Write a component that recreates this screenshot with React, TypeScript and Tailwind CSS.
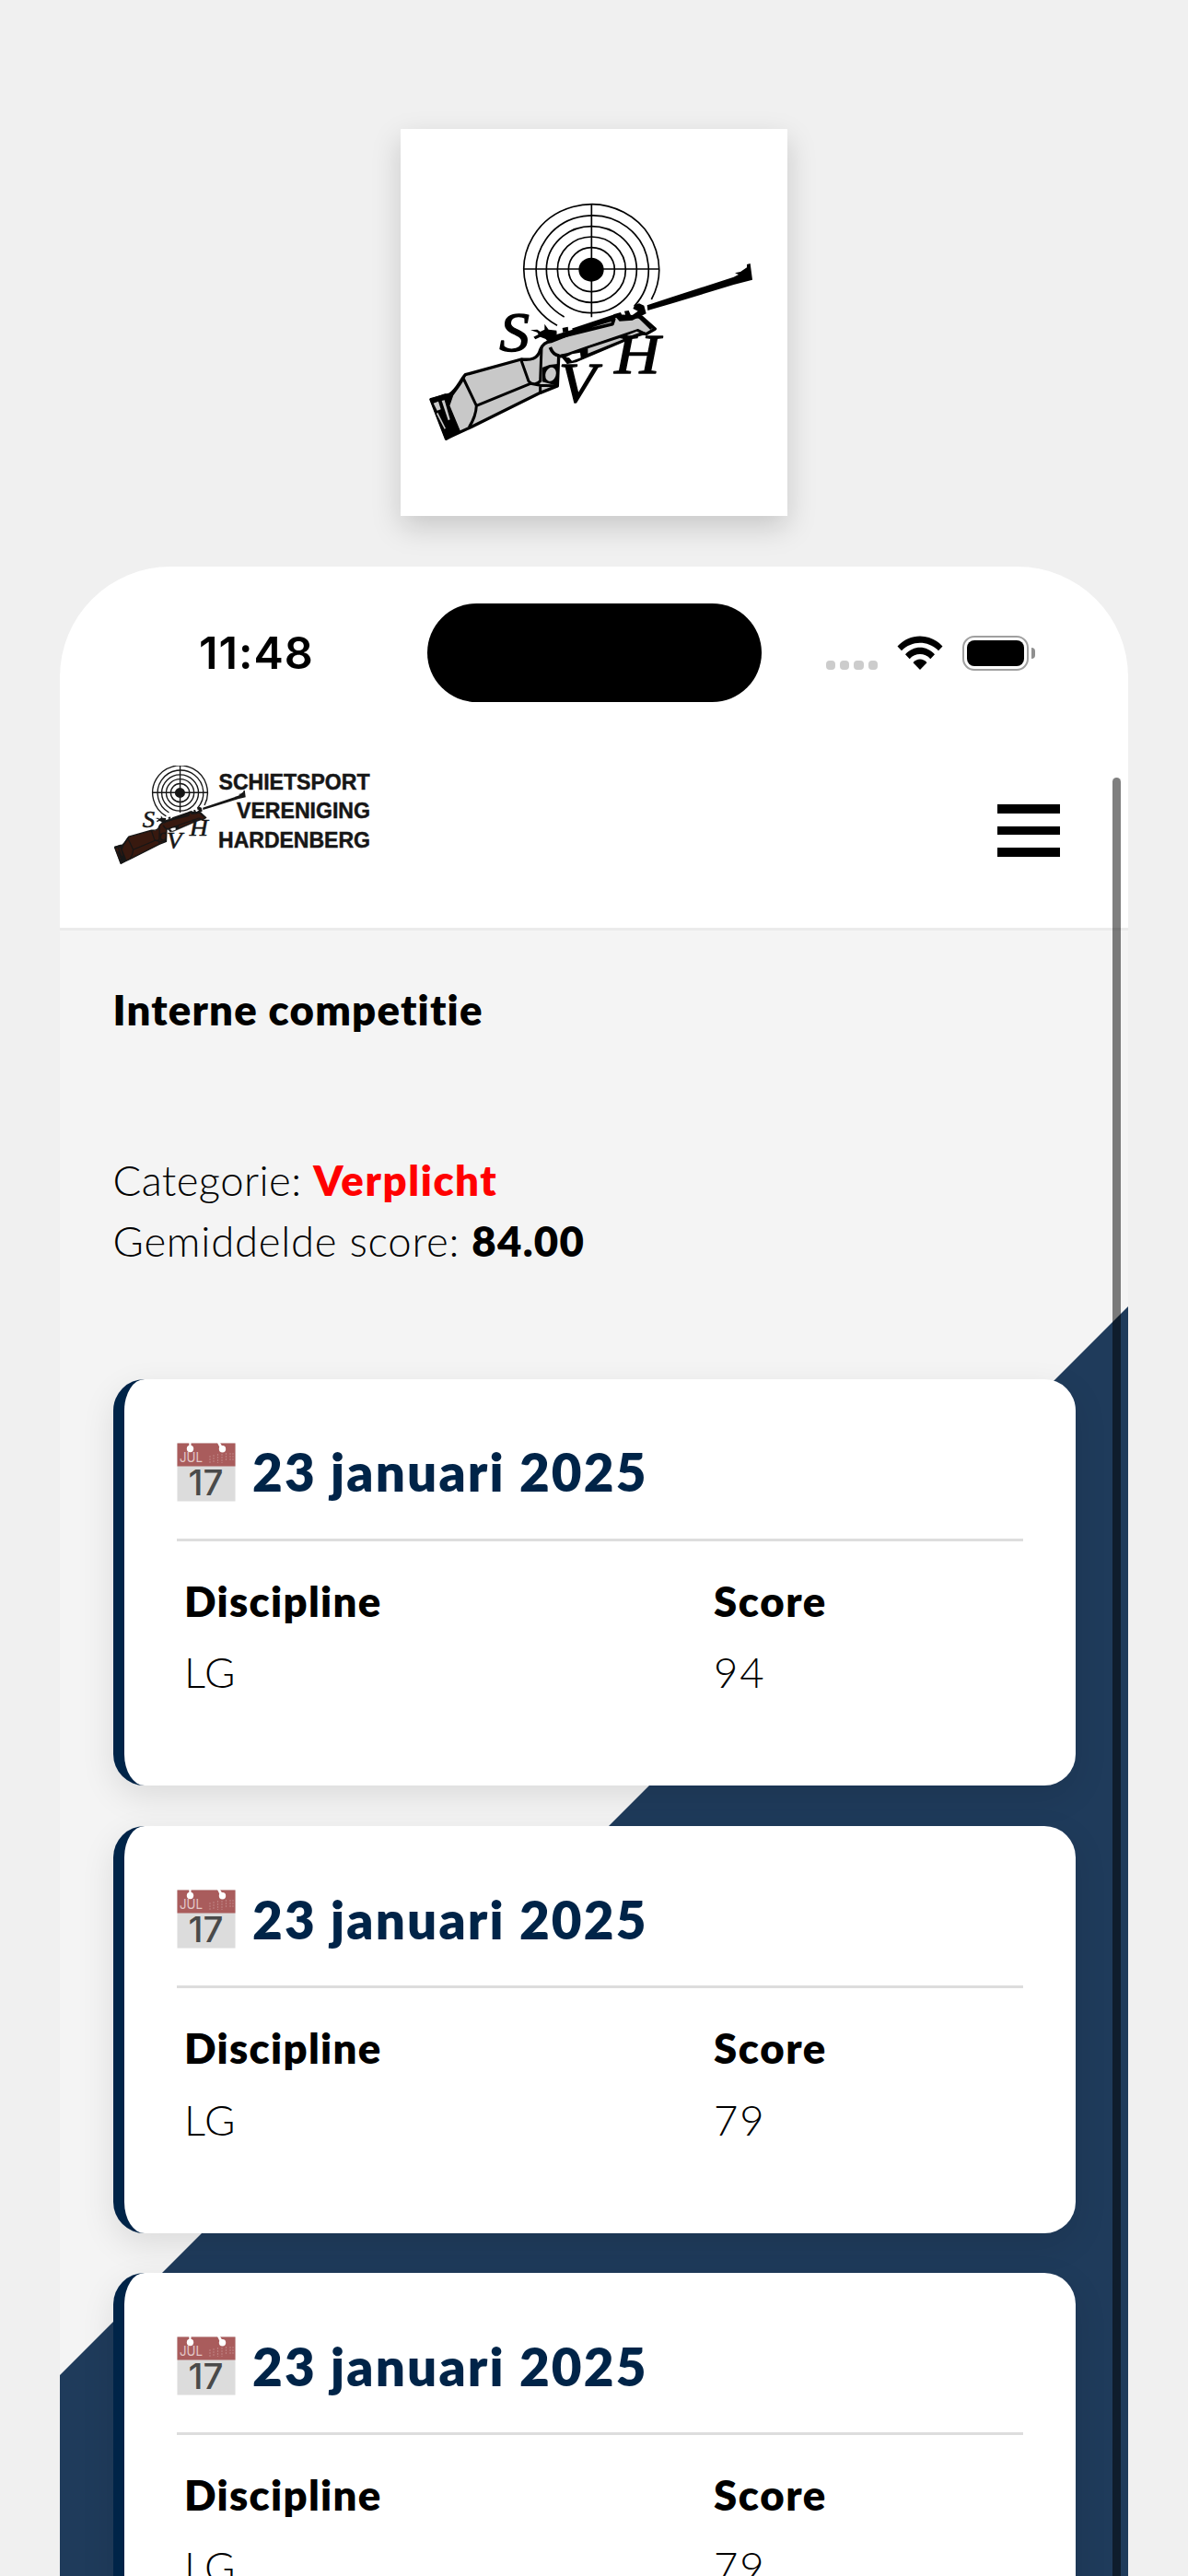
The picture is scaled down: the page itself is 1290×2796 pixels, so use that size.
import React from 'react';

interface Result {
  id: number;
  date: string;
  discipline: string;
  score: number;
}

const results: Result[] = [
  { id: 1, date: '23 januari 2025', discipline: 'LG', score: 94 },
  { id: 2, date: '23 januari 2025', discipline: 'LG', score: 79 },
  { id: 3, date: '23 januari 2025', discipline: 'LG', score: 79 },
];

interface EmblemProps {
  stock: string;
  ink: string;
  ring: number;
}

// target, rifle and the club initials
const Emblem: React.FC<EmblemProps> = ({ stock, ink, ring }) => (
  <g stroke={ink} strokeLinejoin="round" strokeLinecap="butt" fill="none">
    <g strokeWidth={ring}>
      <path d="M555 669 A220 212 0 1 1 862 584" />
      <path d="M578 641 A183 177 0 1 1 806 606" />
      <ellipse cx="667" cy="487" rx="147" ry="141" />
      <ellipse cx="667" cy="487" rx="111" ry="107" />
      <ellipse cx="667" cy="487" rx="75" ry="72" />
      <path d="M446 485H887M667 275V642" />
    </g>
    <ellipse cx="666" cy="487" rx="41" ry="39" fill={ink} stroke="none" />

    <path d="M848 603 L930 576 L1130 511 L1146 503 L1134 498 L1152 494 L1173 480 L1173 470 L1184 467 L1191 520 L1130 536 L930 597 L850 620Z" fill={ink} stroke="none" />

    <path
      d="M256 829 L438 779 C470 782 492 778 500 748 C508 728 520 722 535 721 L745 638 L830 641 L874 680 L845 697 L815 690 L600 764 L560 770 L556 866 L500 888 L278 998 L193 1037 L144 910 L205 893 C228 878 238 850 256 829Z"
      fill={stock}
      strokeWidth="10"
    />
    <path d="M247 836 L292 930 C291 955 284 975 268 1000 M292 930 L468 858 L500 864 L556 866 M438 783 L462 850 C475 864 490 860 500 850 L504 740 M500 864 V886 M212 896 C226 876 236 864 247 845" strokeWidth="9" />
    <path d="M142 909 L190 893 L214 898 L203 930 L238 1014 L193 1041Z" fill={ink} strokeWidth="4" />
    <path d="M152 922 L168 916 L176 942 L164 946Z M179 914 L188 912 L206 975 L200 978Z" fill={stock} stroke="none" />
    <path d="M166 952 L192 1004 L188 1006 L162 956Z" fill={stock} stroke="none" />
    <path d="M506 806 L530 797 L556 794 L557 866 L506 852Z" fill={ink} stroke="none" />
    <ellipse cx="534" cy="828" rx="17" ry="23" fill={stock} stroke="none" transform="rotate(18 534 828)" />
    <path d="M532 740 C540 760 548 764 562 768 M520 714 L740 648 L735 664 L540 712" strokeWidth="11" />
    <path d="M566 765 L588 792 L616 787 L800 709 L845 695 L818 682 L652 738 L590 760Z" fill={ink} strokeWidth="4" />
    <path d="M655 744 L766 708 L770 714 L655 760Z M784 700 L814 688 L824 692 L784 706Z" fill={stock} stroke="none" />
    <path d="M583 772 L604 762 L630 757 L632 774 L603 784 L594 774Z" fill="#fff" stroke="none" />
    <path d="M605 683 L745 636 M822 641 L862 680" strokeWidth="9" />

    {/* sights and bolt */}
    <path d="M468 684 L490 682 L500 689 L514 682 L514 664 L527 682 L553 685 L554 696 L535 726 L516 712 L500 706 L484 714 L478 706 L494 698 L490 691Z" fill={ink} stroke="none" />
    <path d="M572 677 L590 673 L592 688 L574 692Z M738 633 L762 626 L768 640 L778 638 L774 622 L788 620 L796 638 L818 622 L802 614 L808 602 L822 597 L838 604 L845 630 L800 652 L758 655Z" fill={ink} stroke="none" />

    <g fill={ink} strokeWidth="4" fontFamily="'Liberation Serif', serif" fontStyle="italic">
      <text x="367" y="753" fontSize="184" textLength="98" lengthAdjust="spacingAndGlyphs">S</text>
      <text x="560" y="918" fontSize="184" textLength="122" lengthAdjust="spacingAndGlyphs">V</text>
      <text x="742" y="823" fontSize="184" textLength="148" lengthAdjust="spacingAndGlyphs">H</text>
    </g>
  </g>
);

const ClubLogo: React.FC = () => (
  <svg width="284" height="112" viewBox="0 0 284 112">
    <g transform="scale(0.1358 0.1393) translate(-140 -275)">
      <Emblem stock="#38190f" ink="#161616" ring={10} />
    </g>
    <g
      fill="#161616"
      stroke="#161616"
      strokeWidth="0.5"
      fontSize="24"
      fontWeight="bold"
      fontFamily="'Liberation Sans', sans-serif"
    >
      <text x="113.5" y="25.5" textLength="164" lengthAdjust="spacingAndGlyphs">SCHIETSPORT</text>
      <text x="133" y="57.2" textLength="145" lengthAdjust="spacingAndGlyphs">VERENIGING</text>
      <text x="113" y="89" textLength="165" lengthAdjust="spacingAndGlyphs">HARDENBERG</text>
    </g>
  </svg>
);

const CalendarIcon: React.FC = () => (
  <svg width="64" height="64" viewBox="0 0 64 64" className="mt-[3px]">
    <rect x="0.5" y="0.5" width="63" height="63" fill="#dcdcdc" />
    <rect x="0.5" y="0.5" width="63" height="25" fill="#a95c5c" />
    <g fill="#fff">
      <circle cx="14.5" cy="6.5" r="3.7" />
      <rect x="13.3" y="0" width="2.2" height="5" />
      <circle cx="49.5" cy="6.8" r="3.7" />
      <path d="M44 0H47L50 5L47 6Z" />
    </g>
    <g stroke="#bd8080" strokeWidth="1.1" strokeDasharray="2 1">
      <path d="M36 14V22M40 13V22M44.5 12V22M49 12V22M53.5 11V20M58 11V20M61 11V20" />
    </g>
    <text x="3" y="21.3" fontSize="14" fill="#e3c8c8" fontFamily="Inter, sans-serif" textLength="25" lengthAdjust="spacingAndGlyphs">JUL</text>
    <text x="12.5" y="57" fontSize="37.5" fontWeight="500" fill="#4a4a4a" fontFamily="Inter, sans-serif" textLength="38" lengthAdjust="spacingAndGlyphs">17</text>
  </svg>
);

const StatusBar: React.FC = () => (
  <div className="flex h-[147px] items-center pt-10">
    <div className="w-[398.5px] pl-[151px] font-['Inter'] text-[48.5px] leading-[56px] font-semibold tracking-[1px]">11:48</div>
    <div className="h-[107px] w-[363px] rounded-full bg-black" />
    <div className="ml-[70px] flex items-center">
      <div className="mt-[27px] flex gap-[5px]">
        {[0, 1, 2, 3].map((dot) => (
          <span key={dot} className="h-[10px] w-[10.4px] rounded-[4px] bg-[#cccccc]" />
        ))}
      </div>
      <svg width="50" height="37" viewBox="0 0 50 37" className="ml-[20.5px]">
        <path d="M0.5 11.5C14 -3.2 36 -3.2 49.5 11.5L45 16.3C34 4.8 16 4.8 5 16.3Z" />
        <path d="M9 20.3C18 10.3 32 10.3 41 20.3L36.3 25.2C30 18.4 20 18.4 13.7 25.2Z" />
        <path d="M17.5 29.3C21.5 24.3 28.5 24.3 32.5 29.3L25 37Z" />
      </svg>
      <div className="ml-[21px] h-[38px] w-[72px] rounded-[13px] border-[2.5px] border-[#a0a0a0] p-[3px]">
        <div className="h-full rounded-[8px] bg-black" />
      </div>
      <div className="ml-[3px] h-[12px] w-[4px] rounded-r-full bg-[#8f8f8f]" />
    </div>
  </div>
);

const ResultCard: React.FC<{ result: Result }> = ({ result }) => (
  <article className="h-[441.5px] shrink-0 rounded-[34px] border-l-[12px] border-[#002448] bg-white px-[57px] pt-[66px] shadow-[0_12px_36px_rgba(0,0,0,0.1)]">
    <div className="flex items-center gap-[18.5px] border-b-[3px] border-[#dddddd] pb-[40px]">
      <CalendarIcon />
      <h2 className="mt-[2px] text-[56.5px] leading-[64px] font-extrabold tracking-[2.15px] text-[#002448]">{result.date}</h2>
    </div>
    <div className="mt-[32px] grid grid-cols-[575px_1fr] gap-y-[11.5px] pl-[8.5px] text-[45.5px] leading-[66px]">
      <span className="font-extrabold tracking-[1.3px]">Discipline</span>
      <span className="font-extrabold tracking-[1.6px]">Score</span>
      <span className="font-light tracking-[1px]">{result.discipline}</span>
      <span className="font-light tracking-[1.8px]">{result.score}</span>
    </div>
  </article>
);

const App: React.FC = () => (
  <div className="h-[2796px] w-[1290px] overflow-hidden bg-[#f0f0f0] font-['Lato','Open_Sans',sans-serif] text-black">
    <div className="mx-auto mt-[140px] h-[420px] w-[420px] bg-white shadow-[0_12px_30px_rgba(0,0,0,0.17)]">
      <svg width="420" height="420" viewBox="45 29 1260 1260">
        <Emblem stock="#c8c8c8" ink="#000000" ring={5} />
      </svg>
    </div>

    <div className="relative mx-auto mt-[55px] flex h-[2181px] w-[1160px] flex-col overflow-hidden rounded-t-[120px] bg-white">
      <StatusBar />
      <header className="flex h-[248px] items-start justify-between border-b-[3px] border-[#ebebeb] pr-[74px] pl-[59px]">
        <div className="mt-[69px]">
          <ClubLogo />
        </div>
        <div className="mt-[111px] flex flex-col gap-[14px]">
          <span className="h-[9.5px] w-[68px] bg-black" />
          <span className="h-[9.5px] w-[68px] bg-black" />
          <span className="h-[9.5px] w-[68px] bg-black" />
        </div>
      </header>

      <main className="relative h-[1786px] shrink-0 bg-[#f4f4f4]">
        <div className="absolute inset-0 bg-[#1f3b5b] [clip-path:polygon(100%_408px,100%_100%,0_100%,0_1568px)]" />
        <div className="relative px-[57.5px] pt-[53px]">
          <h1 className="text-[45.5px] leading-[66px] font-extrabold tracking-[1.2px]">Interne competitie</h1>
          <div className="mt-[119px] text-[45.5px] leading-[66.4px] font-light tracking-[0.75px]">
            <p>
              <span className="tracking-[0.4px]">Categorie: </span>
              <strong className="font-extrabold tracking-[1.6px] text-[#ff0000]">Verplicht</strong>
            </p>
            <p>
              Gemiddelde score: <strong className="font-extrabold tracking-[1.3px]">84.00</strong>
            </p>
          </div>
          <div className="mt-[116px] flex flex-col gap-[43.7px]">
            {results.map((result) => (
              <ResultCard key={result.id} result={result} />
            ))}
          </div>
        </div>
      </main>

      {/* scroll indicator */}
      <div className="absolute top-[229px] right-[8px] h-[2000px] w-[9px] rounded-full bg-black/50" />
    </div>
  </div>
);

export default App;
